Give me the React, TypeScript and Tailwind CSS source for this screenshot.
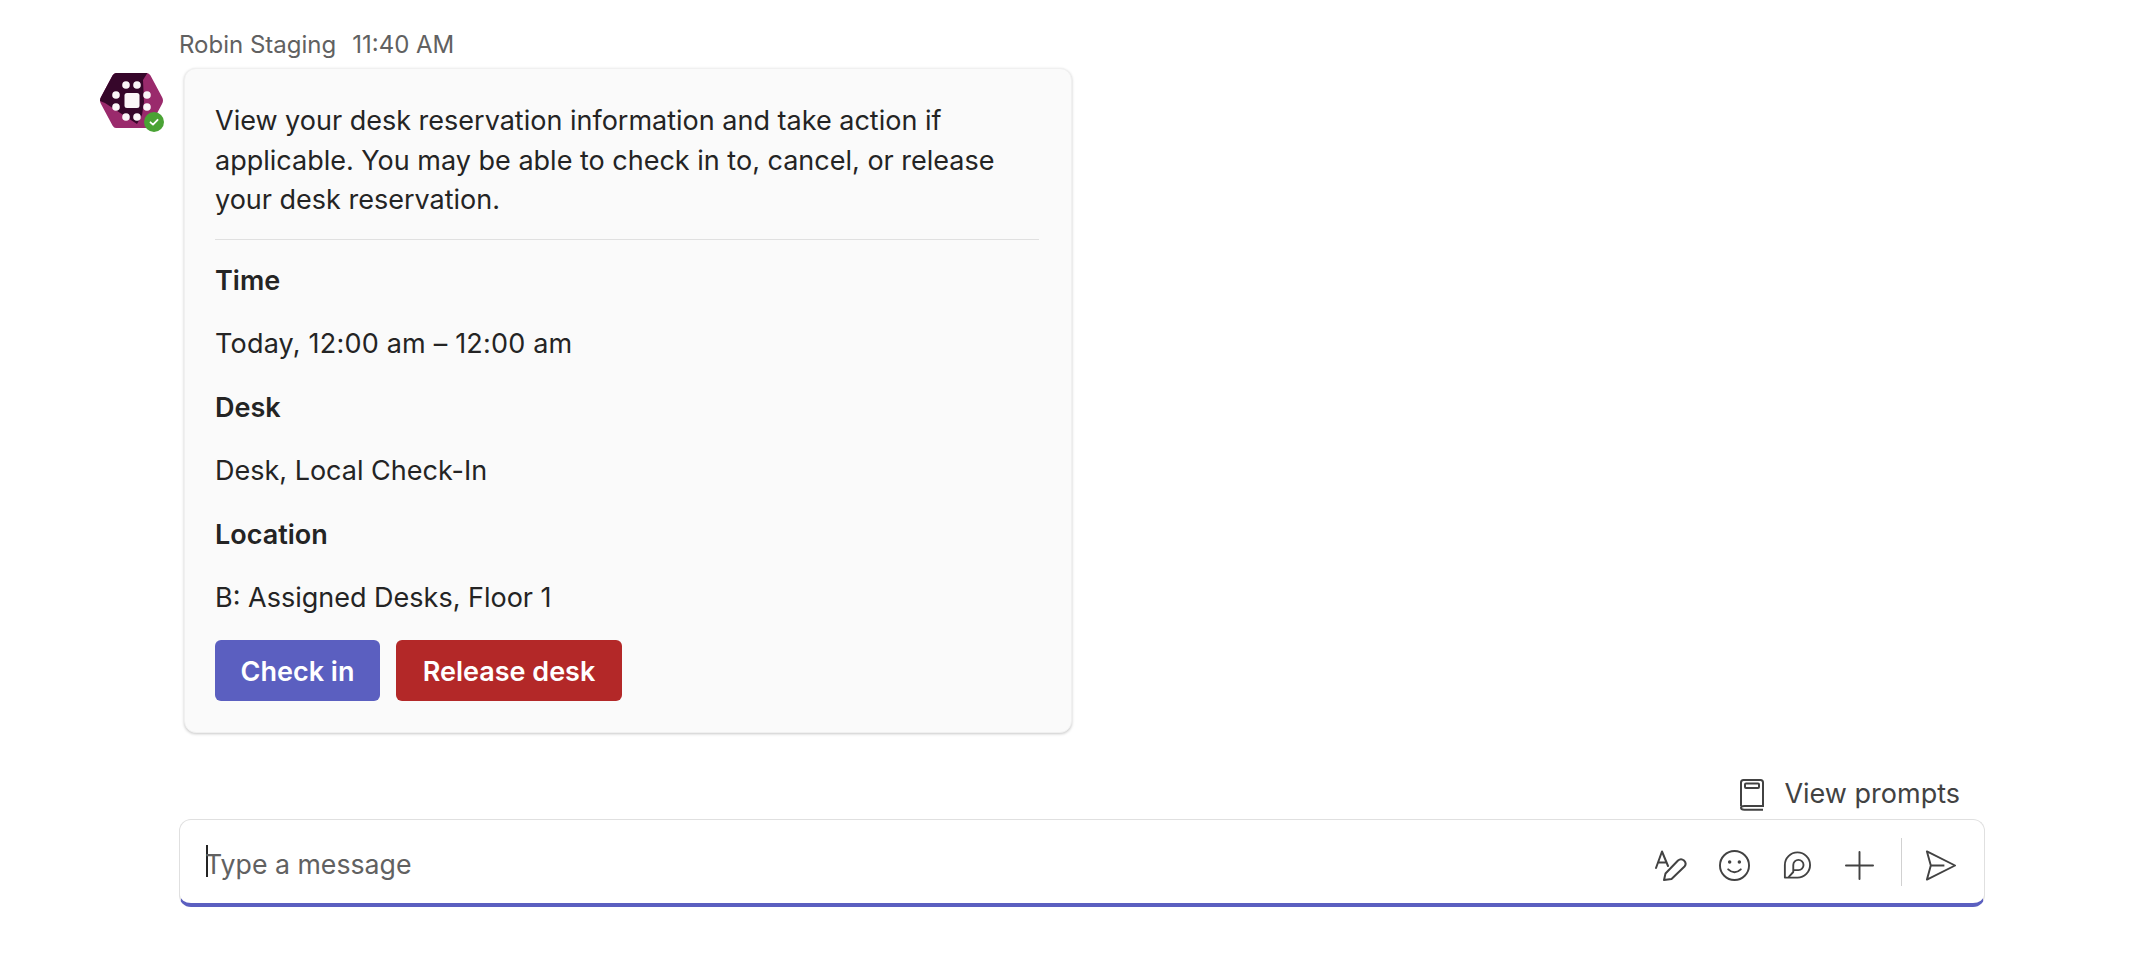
import React from "react";

const font = { fontFamily: "Inter, 'Liberation Sans', sans-serif" };

function Avatar() {
  const dots = [[26,13],[37,13],[16,23],[16,35],[47,23],[47,35],[26,45],[37,45]];
  return (
    <div className="relative w-[66px] h-[62px] shrink-0">
      <svg width="64" height="58" viewBox="0 0 64 58" className="absolute left-0 top-0">
        <defs>
          <clipPath id="hex"><path d="M16 1 H47 Q49 1 50.5 3.5 L62 25 Q64 28.5 62 32 L50.5 53.5 Q49 56 47 56 H16 Q14 56 12.5 53.5 L1 32 Q-1 28.5 1 25 L12.5 3.5 Q14 1 16 1 Z" /></clipPath>
        </defs>
        <g clipPath="url(#hex)">
          <rect width="64" height="58" fill="#9a2a6c" />
          <path d="M0 0 H48 L43 8 L44 30 L42 43 L37 52 L5 31 L0 29 Z" fill="#36062a" />
        </g>
        {dots.map(([x, y], i) => <circle key={i} cx={x} cy={y} r="3.8" fill="#fbf6f8" />)}
        <rect x="24.5" y="21" width="15" height="15" rx="2.5" fill="#fbf6f8" />
      </svg>
      <div className="absolute left-[44px] top-[40px] w-[20px] h-[20px] rounded-full bg-[#4aa335] flex items-center justify-center">
        <svg width="12" height="12" viewBox="0 0 12 12" fill="none"><path d="M2.5 6.3 L5 8.6 L9.6 3.8" stroke="#ffffff" strokeWidth="1.8" strokeLinecap="round" strokeLinejoin="round" /></svg>
      </div>
    </div>
  );
}

export default function App() {
  return (
    <div className="w-[2132px] h-[956px] bg-white overflow-hidden text-[#242424] flex flex-col" style={font}>
      <div className="flex pl-[100px] pt-[33px]">
        <div className="w-[80px] pt-[39px] shrink-0"><Avatar /></div>
        <div className="flex flex-col">
          <div className="flex gap-[16px] text-[#616161] text-[24px] leading-[24px] h-[35px] -ml-[1px]">
            <span>Robin Staging</span><span>11:40 AM</span>
          </div>
          <div className="ml-[4px] w-[888px] h-[665px] bg-[#fafafa] rounded-[12px] shadow-[0_1px_3px_rgba(0,0,0,0.22)] border border-[#f0f0f0] pt-[32px] pl-[30px] pr-[32px] text-[27px] leading-[39.5px]">
            <p>View your desk reservation information and take action if applicable. You may be able to check in to, cancel, or release your desk reservation.</p>
            <div className="h-px bg-[#e0e0e0] mt-[19px] mb-[21px]" />
            <div className="flex flex-col gap-[24px]">
              <p className="font-semibold">Time</p>
              <p className="tracking-[0.2px]">Today, 12:00 am – 12:00 am</p>
              <p className="font-semibold">Desk</p>
              <p>Desk, Local Check-In</p>
              <p className="font-semibold">Location</p>
              <p>B: Assigned Desks, Floor 1</p>
            </div>
            <div className="flex gap-[16px] mt-[22px]">
              <button className="h-[61px] w-[165px] rounded-[6px] bg-[#5b5fc0] text-white font-semibold text-[27px] pt-[3px]">Check in</button>
              <button className="h-[61px] w-[226px] rounded-[6px] bg-[#b32828] text-white font-semibold text-[27px] pt-[3px]">Release desk</button>
            </div>
          </div>
        </div>
      </div>
      <div className="flex justify-end items-center pr-[172px] pt-[37px] h-[86px] text-[#424242] text-[27px]">
        <svg width="24" height="32" viewBox="0 0 24 32" fill="none" stroke="#424242" strokeWidth="2" className="mr-[20px]">
          <path d="M1 27 V3.5 Q1 1 3.5 1 H20.5 Q23 1 23 3.5 V27 H4.5 Q1 27 1 28.8 Q1 30.8 4.5 30.8 H23" />
          <rect x="5" y="4.5" width="14" height="4.5" rx="1" />
        </svg>
        <span>View prompts</span>
      </div>
      <div className="ml-[179px] h-[88px] w-[1806px] bg-white rounded-[12px] border border-[#e0e0e0] border-b-[4px] border-b-[#5b5fc0] flex items-center pl-[26px] pr-[28px]">
        <div className="flex items-center flex-1 text-[27px] text-[#616161]">
          <div className="w-[2px] h-[32px] bg-[#242424]" />
          <span className="pt-[6px] -ml-[3px] text-[26.7px]">Type a message</span>
        </div>
        <div className="flex items-center text-[#424242] pt-[7px]">
          <svg width="32" height="31" viewBox="0 0 32 31" fill="none" stroke="#424242" strokeWidth="2" strokeLinecap="round" strokeLinejoin="round">
            <path d="M1 18 L7 1.5 L13 16 M3.2 12.5 H11" />
            <path d="M9 30 L10.5 23.5 L23 10.5 Q26 8 29 10.5 Q32 13.5 29.5 16.5 L16.5 29 Z" />
          </svg>
          <svg className="ml-[32px]" width="31" height="31" viewBox="0 0 32 32" fill="none" stroke="#424242" strokeWidth="2" strokeLinecap="round">
            <circle cx="16" cy="16" r="15" />
            <path d="M9.5 20 Q16 26 22.5 20" />
            <circle cx="11" cy="12.5" r="1.8" fill="#424242" stroke="none" />
            <circle cx="21" cy="12.5" r="1.8" fill="#424242" stroke="none" />
          </svg>
          <svg className="ml-[33px]" width="28" height="28" viewBox="0 0 30 30" fill="none" stroke="#424242" strokeWidth="2" strokeLinejoin="round">
            <path d="M2 28.5 V15 A13.5 13.5 0 1 1 15.5 28.5 Z" />
            <path d="M6 28 L11 22.5 V15 A5.5 5.5 0 1 1 16.5 20.5 H11" />
          </svg>
          <svg className="ml-[34px]" width="29" height="29" viewBox="0 0 30 30" fill="none" stroke="#424242" strokeWidth="2" strokeLinecap="round">
            <path d="M15 1 V29 M1 15 H29" />
          </svg>
          <div className="ml-[27px] w-px h-[48px] bg-[#d1d1d1] -translate-y-[3px]" />
          <svg className="ml-[23px]" width="31" height="31" viewBox="0 0 32 32" fill="none" stroke="#424242" strokeWidth="2" strokeLinejoin="round">
            <path d="M2 1.5 L31 16 L2 30.5 L6 16 Z M6 16 H20" />
          </svg>
        </div>
      </div>
    </div>
  );
}
